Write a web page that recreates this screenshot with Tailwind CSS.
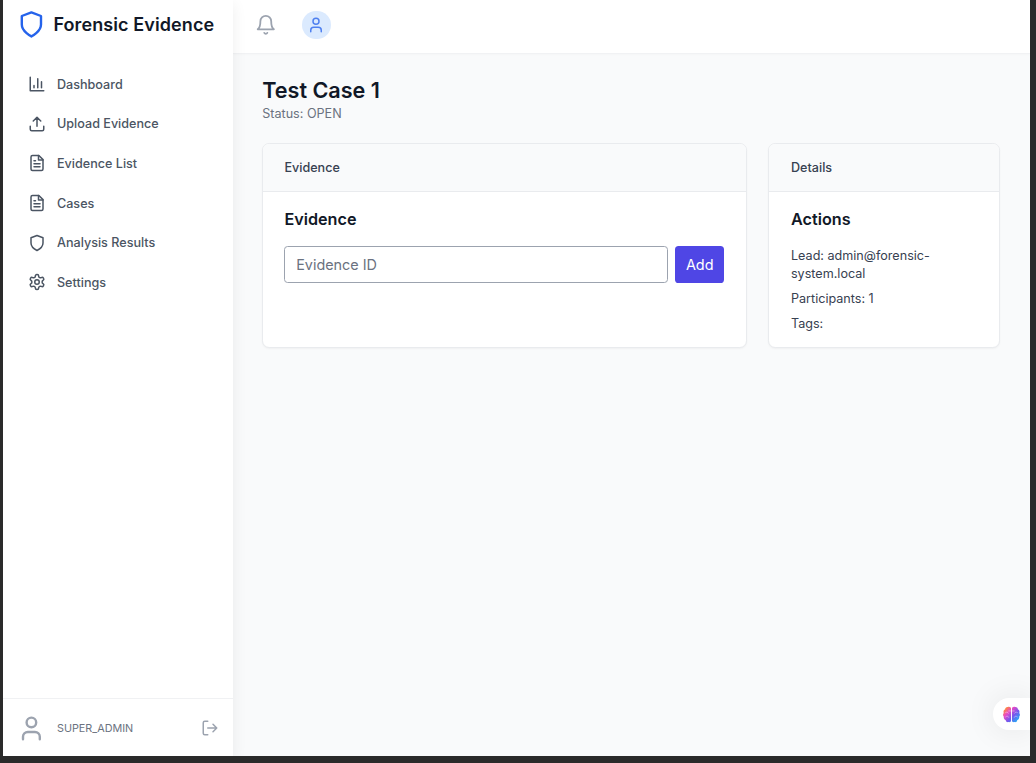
<!DOCTYPE html>
<html lang="en">
<head>
<meta charset="utf-8">
<title>Forensic Evidence</title>
<script src="https://cdn.jsdelivr.net/npm/@tailwindcss/browser@4"></script>
</head>
<body class="h-screen overflow-hidden bg-[#2a2a2a] font-['Inter',sans-serif]">
<svg class="hidden">
  <defs>
    <g id="shield"><path d="M12 22s8-4 8-10V5l-8-3-8 3v7c0 6 8 10 8 10"/></g>
    <g id="file"><path d="M14.500 2H6a2 2 0 0 0-2 2v16a2 2 0 0 0 2 2h12a2 2 0 0 0 2-2V7.500L14.500 2z"/><path d="M14 2v6h6M10 9H8M16 13H8M16 17H8"/></g>
    <g id="user"><path d="M19 21v-2a4 4 0 0 0-4-4H9a4 4 0 0 0-4 4v2"/><circle cx="12" cy="7" r="4"/></g>
  </defs>
</svg>
<div class="relative ml-[3px] flex h-[756px] w-[1027px] overflow-hidden bg-[#f9fafb]">
  <aside class="z-10 flex w-[230.4px] shrink-0 flex-col bg-white shadow-[0_4px_14px_rgba(0,0,0,0.07)]">
    <div class="flex h-[49px] items-center pl-[14.4px]">
      <svg class="size-[28.8px] text-[#2563eb]" viewBox="0 0 24 24" fill="none" stroke="currentColor" stroke-width="2" stroke-linecap="round" stroke-linejoin="round"><use href="#shield"/></svg>
      <span class="ml-[7.2px] whitespace-nowrap text-[18px] font-semibold tracking-[0.1px] text-[#111827]">Forensic Evidence</span>
    </div>
    <nav class="mt-[17.300px] flex flex-col gap-[3.6px] pl-[25.2px] text-[12.6px] font-medium text-[#4b5563]">
      <a class="flex h-9 items-center gap-[10.8px]"><svg class="size-[18px]" viewBox="0 0 24 24" fill="none" stroke="currentColor" stroke-width="2" stroke-linecap="round" stroke-linejoin="round"><path d="M3 3v18h18M18 17V9M13 17V5M8 17v-3"/></svg><span class="pt-[1.8px]">Dashboard</span></a>
      <a class="flex h-9 items-center gap-[10.8px]"><svg class="size-[18px]" viewBox="0 0 24 24" fill="none" stroke="currentColor" stroke-width="2" stroke-linecap="round" stroke-linejoin="round"><path d="M21 15v4a2 2 0 0 1-2 2H5a2 2 0 0 1-2-2v-4M17 8l-5-5-5 5M12 3v12"/></svg><span class="pt-[1.8px]">Upload Evidence</span></a>
      <a class="flex h-9 items-center gap-[10.8px]"><svg class="size-[18px]" viewBox="0 0 24 24" fill="none" stroke="currentColor" stroke-width="2" stroke-linecap="round" stroke-linejoin="round"><use href="#file"/></svg><span class="pt-[1.8px]">Evidence List</span></a>
      <a class="flex h-9 items-center gap-[10.8px]"><svg class="size-[18px]" viewBox="0 0 24 24" fill="none" stroke="currentColor" stroke-width="2" stroke-linecap="round" stroke-linejoin="round"><use href="#file"/></svg><span class="pt-[1.8px]">Cases</span></a>
      <a class="flex h-9 items-center gap-[10.8px]"><svg class="size-[18px]" viewBox="0 0 24 24" fill="none" stroke="currentColor" stroke-width="2" stroke-linecap="round" stroke-linejoin="round"><use href="#shield"/></svg><span class="pt-[1.8px]">Analysis Results</span></a>
      <a class="flex h-9 items-center gap-[10.8px]"><svg class="size-[18px]" viewBox="0 0 24 24" fill="none" stroke="currentColor" stroke-width="2" stroke-linecap="round" stroke-linejoin="round"><path d="M12.220 2h-.44a2 2 0 0 0-2 2v.18a2 2 0 0 1-1 1.730l-.43.25a2 2 0 0 1-2 0l-.15-.08a2 2 0 0 0-2.730.73l-.22.38a2 2 0 0 0 .73 2.730l.15.1a2 2 0 0 1 1 1.720v.51a2 2 0 0 1-1 1.740l-.15.09a2 2 0 0 0-.73 2.730l.22.38a2 2 0 0 0 2.730.73l.15-.08a2 2 0 0 1 2 0l.43.25a2 2 0 0 1 1 1.730V20a2 2 0 0 0 2 2h.44a2 2 0 0 0 2-2v-.18a2 2 0 0 1 1-1.730l.43-.25a2 2 0 0 1 2 0l.15.08a2 2 0 0 0 2.730-.73l.22-.39a2 2 0 0 0-.73-2.730l-.15-.08a2 2 0 0 1-1-1.740v-.5a2 2 0 0 1 1-1.740l.15-.09a2 2 0 0 0 .73-2.730l-.22-.38a2 2 0 0 0-2.730-.73l-.15.08a2 2 0 0 1-2 0l-.43-.25a2 2 0 0 1-1-1.730V4a2 2 0 0 0-2-2z"/><circle cx="12" cy="12" r="3"/></svg><span class="pt-[1.8px]">Settings</span></a>
    </nav>
    <div class="mt-auto flex h-[58px] items-center border-t border-[#f0f1f3] pt-px pr-[14.4px] pl-[14.4px]">
      <svg class="size-[28.8px] text-[#9ca3af]" viewBox="0 0 24 24" fill="none" stroke="currentColor" stroke-width="2" stroke-linecap="round" stroke-linejoin="round"><use href="#user"/></svg>
      <span class="ml-[10.8px] pt-[2px] text-[10.8px] text-[#6b7280]">SUPER_ADMIN</span>
      <svg class="ml-auto size-[18px] text-[#9ca3af]" viewBox="0 0 24 24" fill="none" stroke="currentColor" stroke-width="2" stroke-linecap="round" stroke-linejoin="round"><path d="M9 21H5a2 2 0 0 1-2-2V5a2 2 0 0 1 2-2h4M16 17l5-5-5-5M21 12H9"/></svg>
    </div>
  </aside>
  <div class="flex min-w-0 flex-1 flex-col">
    <header class="flex h-[54px] shrink-0 items-center gap-[25.200px] border-b border-[#f1f2f4] bg-white pb-[3px] pl-[21.6px] shadow-[0_1px_2px_rgba(0,0,0,0.02)]">
      <svg class="size-[21.6px] text-[#9ca3af]" viewBox="0 0 24 24" fill="none" stroke="currentColor" stroke-width="2" stroke-linecap="round" stroke-linejoin="round"><path d="M6 8a6 6 0 0 1 12 0c0 7 3 9 3 9H3s3-2 3-9M10.300 21a1.940 1.940 0 0 0 3.400 0"/></svg>
      <span class="flex size-[28.800px] items-center justify-center rounded-full bg-[#dbeafe]"><svg class="size-[18px] text-[#4f80f0]" viewBox="0 0 24 24" fill="none" stroke="currentColor" stroke-width="2" stroke-linecap="round" stroke-linejoin="round"><use href="#user"/></svg></span>
    </header>
    <main class="pt-[22px] pr-[29.6px] pl-[28.800px]">
      <h1 class="text-[21.6px] leading-[28.800px] font-semibold text-[#111827]">Test Case 1</h1>
      <p class="text-[12.6px] leading-[18px] text-[#6b7280]">Status: OPEN</p>
      <div class="mt-[20.500px] flex gap-[21.600px]">
        <section class="h-[204.400px] w-[484.600px] shrink-0 overflow-hidden rounded-[7.200px] border border-[#e9ebee] bg-white shadow-[0_1px_2px_rgba(0,0,0,0.04)]">
          <div class="flex h-[48px] items-center border-b border-[#e9ebee] bg-[#f9fafb] px-[21.200px] pt-px text-[12.6px] font-medium text-[#374151]">Evidence</div>
          <div class="pr-[21.600px] pl-[21.200px] pt-[14.400px]">
            <h2 class="text-[16.200px] leading-[25.200px] font-semibold text-[#111827]">Evidence</h2>
            <div class="mt-[14px] flex gap-[7.200px]">
              <input class="h-[37.400px] min-w-0 flex-1 rounded-[3.600px] border border-[#9ca3af] px-[10.800px] text-[14.400px] text-[#6b7280] placeholder:text-[#6b7280]" placeholder="Evidence ID">
              <button class="h-[37.400px] w-[49px] rounded-[3.600px] bg-[#4f46e5] text-[14.400px] text-white">Add</button>
            </div>
          </div>
        </section>
        <section class="h-[204.400px] min-w-0 flex-1 overflow-hidden rounded-[7.200px] border border-[#e9ebee] bg-white shadow-[0_1px_2px_rgba(0,0,0,0.04)]">
          <div class="flex h-[48px] items-center border-b border-[#e9ebee] bg-[#f9fafb] px-[21.600px] pt-px text-[12.6px] font-medium text-[#374151]">Details</div>
          <div class="px-[21.600px] pt-[14.400px]">
            <h2 class="text-[16.200px] leading-[25.200px] font-semibold text-[#111827]">Actions</h2>
            <div class="mt-[15px] flex flex-col gap-[7px] text-[12.6px] leading-[18px] text-[#374151]">
              <p>Lead: admin@forensic-system.local</p>
              <p>Participants: 1</p>
              <p>Tags:</p>
            </div>
          </div>
        </section>
      </div>
    </main>
  </div>
  <div class="absolute top-[698px] right-0 flex h-[32px] w-[37px] items-center rounded-l-full bg-white pl-[9px] shadow-[0_0_32px_rgba(0,0,0,0.09)]">
    <svg class="size-[19px]" viewBox="0 0 24 24"><defs><linearGradient id="brain" x1="0" y1="0" x2="24" y2="24" gradientUnits="userSpaceOnUse"><stop offset=".18" stop-color="#ff8a3d"/><stop offset=".36" stop-color="#e948c5"/><stop offset=".58" stop-color="#7557ee"/><stop offset=".82" stop-color="#28a8f5"/></linearGradient></defs><path fill="url(#brain)" d="M11.400 4.500C11.400 2.500 9 1.400 7.300 2.600 5.400 2.300 3.900 3.800 4 5.500 2.200 6.300 1.400 8.300 2.200 10 1 11.400 1 13.600 2.300 14.900c-.4 1.900.7 3.500 2.300 4 .3 2.200 2.200 3.200 4 2.600 1.500.6 2.800-.4 2.800-2zM12.600 4.500c0-2 2.400-3.100 4.100-1.900 1.900-.3 3.400 1.200 3.300 2.900 1.800.8 2.600 2.800 1.800 4.500 1.200 1.400 1.200 3.600-.1 4.900.4 1.900-.7 3.500-2.300 4-.3 2.200-2.200 3.200-4 2.600-1.500.6-2.800-.4-2.800-2z"/><path fill="none" stroke="#fff" stroke-opacity=".5" stroke-width="1" stroke-linecap="round" d="M4.500 9.500c1.500-1 3-.5 3.500.8M11 7.500H8.500M4.500 15c1.500-1.500 3.500-1 4 .5M19.500 9.500c-1.500-1-3-.5-3.500.8M13 7.500h2.500M19.500 15c-1.500-1.500-3.500-1-4 .5"/></svg>
  </div>
</div>
</body>
</html>
